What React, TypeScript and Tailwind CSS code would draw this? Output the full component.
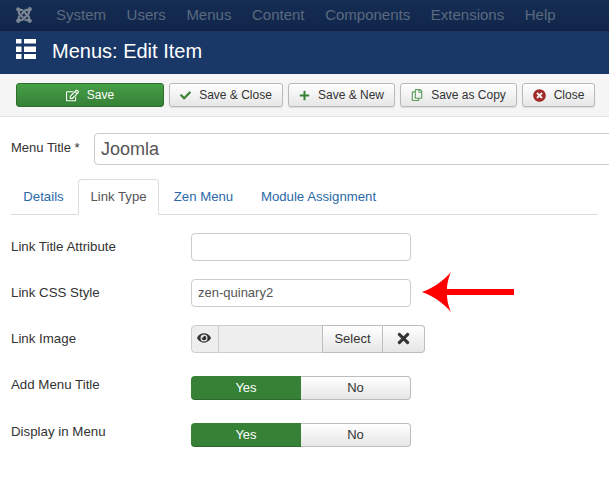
import React from "react";
import { FaJoomla, FaRegEdit, FaCheck, FaPlus, FaRegCopy, FaTimesCircle, FaEye, FaTimes } from "react-icons/fa";

const font = { fontFamily: '"Liberation Sans", Arial, sans-serif' };

function ToolButton({ icon, label, className }: { icon: React.ReactNode; label: string; className: string }) {
  return (
    <div className={`flex h-[24px] items-center justify-center gap-[8px] rounded-[3px] border border-[#b9b9b9] bg-gradient-to-b from-white to-[#e6e6e6] text-[12px] text-[#333] shadow-[0_1px_1px_rgba(0,0,0,0.1)] ${className}`}>
      {icon}
      <span>{label}</span>
    </div>
  );
}

function Row({ label, children, className, labelClass = "" }: { label: string; children: React.ReactNode; className: string; labelClass?: string }) {
  return (
    <div className={`flex items-center ${className}`}>
      <div className={`w-[180px] text-[13.3px] text-[#333] ${labelClass}`}>{label}</div>
      {children}
    </div>
  );
}

function Toggle() {
  return (
    <div className="flex h-[24px] w-[220px] text-[13px]">
      <div className="flex w-[110px] items-center justify-center rounded-l-[4px] bg-[#378137] text-white shadow-[inset_0_-1px_0_rgba(0,0,0,0.2)]">Yes</div>
      <div className="flex w-[110px] items-center justify-center rounded-r-[4px] border border-l-0 border-[#bdbdbd] bg-gradient-to-b from-white to-[#e6e6e6] text-[#333]">No</div>
    </div>
  );
}

export default function App() {
  return (
    <div className="relative h-[490px] w-[609px] overflow-hidden bg-white" style={font}>
      <div className="flex h-[31px] items-center border-b border-[#0f2140] bg-gradient-to-b from-[#152c53] to-[#11264a] pl-[15px] text-[15px] text-[#5a6a80]">
        <FaJoomla className="h-[18px] w-[18px] text-[#7b8694]" />
        <div className="ml-[23px] flex gap-[20.6px]">
          <span>System</span>
          <span>Users</span>
          <span>Menus</span>
          <span>Content</span>
          <span>Components</span>
          <span>Extensions</span>
          <span>Help</span>
        </div>
      </div>
      <div className="flex h-[43px] items-start bg-[#1a3867] pl-[16px] pt-[8px] text-white">
        <svg width="20" height="21" viewBox="0 0 20 21" fill="currentColor">
          <rect x="0" y="0" width="5.5" height="4.5" />
          <rect x="8" y="0" width="12" height="4.5" />
          <rect x="0" y="7.5" width="5.5" height="5.5" />
          <rect x="8" y="7.5" width="12" height="5.5" />
          <rect x="0" y="15" width="5.5" height="5" />
          <rect x="8" y="15" width="12" height="5" />
        </svg>
        <span className="ml-[16px] text-[20px] leading-[24px]">Menus: Edit Item</span>
      </div>
      <div className="flex h-[43px] gap-[5px] border-b border-[#e3e3e3] bg-[#f5f5f5] pl-[16px] pt-[9px]">
        <div className="flex h-[24px] w-[148px] items-center justify-center gap-[8px] rounded-[3px] border border-[#2c6e2c] bg-gradient-to-b from-[#47a047] to-[#358035] text-[12px] text-white">
          <FaRegEdit className="h-[13px] w-[13px]" />
          <span>Save</span>
        </div>
        <ToolButton className="w-[114px]" icon={<FaCheck className="h-[11px] w-[11px] text-[#378137]" />} label="Save &amp; Close" />
        <ToolButton className="w-[107px]" icon={<FaPlus className="h-[11px] w-[11px] text-[#378137]" />} label="Save &amp; New" />
        <ToolButton className="w-[117px]" icon={<FaRegCopy className="h-[12px] w-[12px] text-[#5c9c5c]" />} label="Save as Copy" />
        <ToolButton className="w-[73px]" icon={<FaTimesCircle className="h-[13px] w-[13px] text-[#a32a2a]" />} label="Close" />
      </div>
      <div className="flex items-center pl-[11px] pt-[16px]">
        <div className="mb-[3px] w-[83px] shrink-0 whitespace-nowrap text-[13px] text-[#333]">Menu Title *</div>
        <div className="flex h-[32px] w-[530px] shrink-0 items-center rounded-[4px] border border-[#cccccc] pl-[6px] text-[18px] text-[#555]">Joomla</div>
      </div>
      <div className="mx-[11px] mt-[14px] flex h-[36px] items-end border-b border-[#dddddd] pl-[1px] text-[13.2px] text-[#2a69a8]">
        <div className="flex h-[35px] w-[66px] items-center justify-center pr-[3px]">Details</div>
        <div className="-mb-px flex h-[36px] w-[81px] items-center justify-center rounded-t-[4px] border border-b-white border-[#dddddd] bg-white text-[#555]">Link Type</div>
        <div className="flex h-[35px] w-[87px] items-center justify-center pl-[2px]">Zen Menu</div>
        <div className="flex h-[35px] w-[145px] items-center justify-center">Module Assignment</div>
      </div>
      <div className="pl-[11px]">
        <Row label="Link Title Attribute" className="mt-[18px] h-[28px]">
          <div className="h-[28px] w-[220px] rounded-[4px] border border-[#cccccc]" />
        </Row>
        <Row label="Link CSS Style" className="mt-[18px] h-[28px]">
          <div className="flex h-[28px] w-[220px] items-center rounded-[4px] border border-[#cccccc] pl-[6px] text-[13px] text-[#555]">zen-quinary2</div>
        </Row>
        <Row label="Link Image" className="mt-[18px] h-[28px]">
          <div className="flex h-[28px] w-[234px] text-[13px] text-[#333]">
            <div className="flex w-[28px] items-center justify-center rounded-l-[4px] border border-[#cccccc] bg-[#eeeeee] pb-[2px] pr-[3px]">
              <FaEye className="h-[14px] w-[14px] text-[#333]" />
            </div>
            <div className="w-[103px] border-y border-[#cccccc] bg-[#eeeeee]" />
            <div className="flex w-[61px] items-center justify-center border border-[#bdbdbd] bg-gradient-to-b from-white to-[#e6e6e6]">Select</div>
            <div className="flex w-[42px] items-center justify-center rounded-r-[4px] border border-l-0 border-[#bdbdbd] bg-gradient-to-b from-white to-[#e6e6e6] pb-[1px]">
              <FaTimes className="h-[17px] w-[17px] text-[#333]" />
            </div>
          </div>
        </Row>
        <Row label="Add Menu Title" labelClass="mb-[6px]" className="mt-[23px] h-[24px]">
          <Toggle />
        </Row>
        <Row label="Display in Menu" labelClass="mb-[6px]" className="mt-[23px] h-[24px]">
          <Toggle />
        </Row>
      </div>
      <svg className="absolute left-[420px] top-[270px]" width="96" height="44" viewBox="0 0 96 44">
        <path d="M2 22 C14 18 24 10 31 2 C28 9 27 15 27 19 L94 19 L94 25 L27 25 C27 29 28 35 31 42 C24 34 14 26 2 22 Z" fill="#fe0000" />
      </svg>
    </div>
  );
}
